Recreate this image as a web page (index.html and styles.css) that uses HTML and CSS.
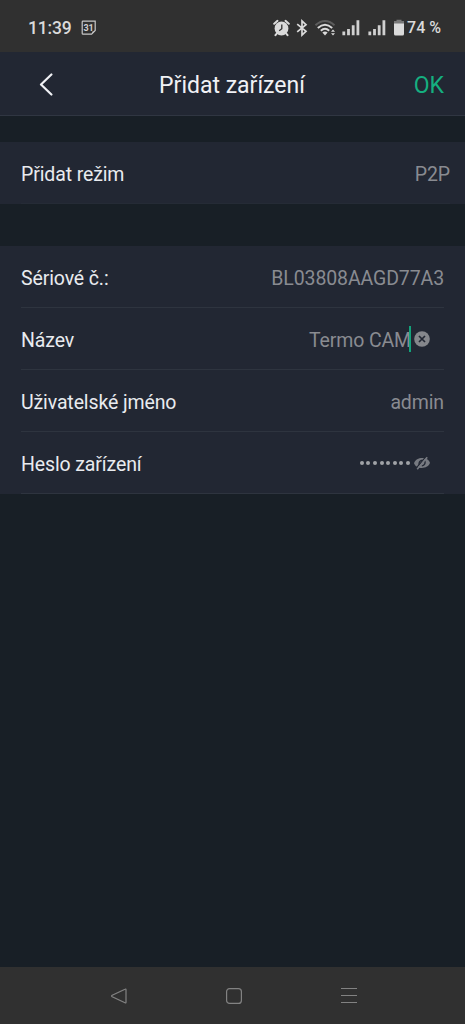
FILE: index.html
```html
<!DOCTYPE html>
<html lang="cs">
<head>
<meta charset="utf-8">
<title>Přidat zařízení</title>
<link rel="stylesheet" href="styles.css">
</head>
<body>
<div class="screen">
  <div class="status">
    <span class="clock">11:39</span>
    <svg class="calendar" width="16" height="16" viewBox="0 0 16 16"><path d="M2 1.2H14.2V10.5L10.6 14.2H2Q1.2 14.2 1.2 13.4V2Q1.2 1.2 2 1.2Z" fill="none" stroke="#c8c8c8" stroke-width="1.2"/><path d="M11.4 13.6V11.4H13.6Z" fill="#c8c8c8"/><text x="7.6" y="10.8" text-anchor="middle" class="day">31</text></svg>
    <div class="indicators">
      <svg width="17" height="18" viewBox="0 0 17 18"><path d="M1.2 4.8 4.5 1.8M15.8 4.8 12.5 1.8M3.8 14.5 2.5 16.2M13.2 14.5 14.5 16.2" stroke="#dadada" stroke-width="2" stroke-linecap="round"/><circle cx="8.5" cy="9.5" r="6.9" fill="#dadada"/><path d="M8.8 5.5V9.7L6.2 11.8" fill="none" stroke="#303030" stroke-width="1.3"/></svg>
      <svg class="bluetooth" width="12" height="18" viewBox="0 0 12 18"><path d="M1.2 5.2 10 12.4 6 16V2L10 5.6 1.2 12.8" fill="none" stroke="#dadada" stroke-width="1.7"/></svg>
      <svg class="wifi" width="22" height="18" viewBox="0 0 22 18"><g fill="none" stroke-width="1.9"><path d="M.5 6.2Q10 -2.2 19.5 6.2" stroke="#5c5c5c"/><path d="M2.8 9Q10 2.4 17.2 9" stroke="#dadada"/><path d="M5.8 11.8Q10 7.8 14.2 11.8" stroke="#dadada"/></g><path d="M7.4 13.6Q10 11.4 12.6 13.6L10 16.4Z" fill="#dadada"/><path d="M16 12.8 18 10.4 20 12.8ZM16 14.2 18 16.6 20 14.2Z" fill="#dadada"/></svg>
      <svg class="signal" width="18" height="18" viewBox="0 0 18 18"><path d="M1.8 16.2V12.5M6.5 16.2V10M11.2 16.2V6.2M15.9 16.2V1.2" stroke="#d0d0d0" stroke-width="2.8"/></svg>
      <svg class="signal second" width="18" height="18" viewBox="0 0 18 18"><path d="M1.8 16.2V12.5M6.5 16.2V10M11.2 16.2V6.2M15.9 16.2V1.2" stroke="#d0d0d0" stroke-width="2.8"/></svg>
      <svg class="battery" width="12" height="18" viewBox="0 0 12 18"><path d="M3.5 .8H8.5V2H11V5H1V2H3.5Z" fill="#777"/><path d="M1 4.5H11V15Q11 16.5 9.5 16.5H2.5Q1 16.5 1 15Z" fill="#dadada"/></svg>
      <span class="percent">74 %</span>
    </div>
  </div>
  <header class="bar">
    <svg class="back" width="16" height="24" viewBox="0 0 16 24"><path d="M13.4 1.5 3 11.5 13.4 21.5" fill="none" stroke="#f0f1f5" stroke-width="2.2" stroke-linecap="round" stroke-linejoin="round"/></svg>
    <h1 class="title">Přidat zařízení</h1>
    <span class="ok">OK</span>
  </header>
  <main class="content">
    <section class="card">
      <div class="row mode"><span class="label">Přidat režim</span><span class="value p2p">P2P</span></div>
    </section>
    <section class="card">
      <div class="row"><span class="label">Sériové č.:</span><span class="value">BL03808AAGD77A3</span></div>
      <div class="row"><span class="label">Název</span><span class="value name">Termo CAM</span><i class="caret"></i>
        <svg class="clear" width="16" height="16" viewBox="0 0 16 16"><circle cx="8" cy="8" r="7.8" fill="#85878c"/><path d="M5 5 11 11M11 5 5 11" stroke="#222733" stroke-width="1.7"/></svg></div>
      <div class="row"><span class="label">Uživatelské jméno</span><span class="value">admin</span></div>
      <div class="row"><span class="label">Heslo zařízení</span><span class="dots"><i></i><i></i><i></i><i></i><i></i><i></i><i></i><i></i></span>
        <svg class="eye" width="18" height="14" viewBox="0 0 18 14"><path d="M1 7.2C3 .4 15 .4 17 6.8C15 13.6 3 13.6 1 7.2Z" fill="#777a81"/><path d="M6.2 9.5Q5.2 5 9.4 4.1M11.8 4.8Q13 8.8 8.8 10" fill="none" stroke="#222733" stroke-width="1.3"/><path d="M3 12.4 13 .6" stroke="#222733" stroke-width="1.3"/><path d="M4.2 13.2 14.2 1.2" stroke="#777a81" stroke-width="1.6"/></svg></div>
    </section>
  </main>
  <nav class="nav">
    <svg width="18" height="18" viewBox="0 0 18 18"><path d="M15 2.2Q16 1.6 16 2.8V15.2Q16 16.4 15 15.8L2.2 9.8Q1 9 2.2 8.2Z"/></svg>
    <svg width="18" height="18" viewBox="0 0 18 18"><rect x="1.6" y="1.6" width="14.8" height="14.8" rx="3"/></svg>
    <svg width="18" height="18" viewBox="0 0 18 18"><path d="M1 1.5H17M1 8.5H17M1 15.5H17"/></svg>
  </nav>
</div>
</body>
</html>
```
FILE: styles.css
```css
body {
  margin: 0;
  background: #181f26;
  font-family: Roboto, sans-serif;
}
.screen {
  width: 465px;
  height: 1024px;
  display: flex;
  flex-direction: column;
  overflow: hidden;
}
.status {
  height: 52px;
  box-sizing: border-box;
  padding: 3px 24px 0 28px;
  background: #303030;
  color: #dadada;
  display: flex;
  align-items: center;
}
.clock {
  font-size: 17.5px;
  font-weight: 500;
  letter-spacing: -0.2px;
}
.calendar { margin-left: 10px; }
.day {
  font-size: 9px;
  font-weight: 700;
  fill: #d0d0d0;
}
.indicators {
  margin-left: auto;
  display: flex;
  align-items: center;
}
.bluetooth { margin-left: 6px; }
.wifi { margin-left: 7px; }
.signal { margin-left: 5px; }
.second { margin-left: 8px; }
.battery { margin-left: 7px; }
.percent {
  margin-left: 2px;
  font-size: 16px;
  font-weight: 500;
}
.bar {
  height: 64px;
  box-sizing: border-box;
  padding: 2px 21px 0 38px;
  background: #222733;
  border-bottom: 1px solid #303642;
  display: grid;
  grid-template-columns: 39px 1fr 57px;
  align-items: center;
}
.title {
  margin: 0;
  padding-top: 2px;
  font-size: 23px;
  font-weight: 400;
  color: #f0f1f5;
  text-align: center;
  white-space: nowrap;
}
.ok {
  padding-top: 2px;
  color: #15af80;
  font-size: 23px;
  text-align: right;
}
.content {
  flex: 1;
  padding-top: 26px;
  display: flex;
  flex-direction: column;
  gap: 42px;
}
.card { background: #222733; }
.row {
  height: 61px;
  margin: 0 21px;
  border-bottom: 1px solid #2e343f;
  display: flex;
  align-items: center;
  font-size: 19.5px;
  letter-spacing: -0.12px;
}
.mode {
  margin-right: 15px;
  border-bottom-color: #252b36;
}
.label {
  padding-top: 3px;
  color: #e9ebef;
  margin-right: auto;
}
.value {
  padding-top: 3px;
  color: #898b91;
}
.name { margin-right: -2px; }
.caret {
  width: 2px;
  height: 26px;
  background: #13a27b;
}
.clear { margin: 0 14px 0 3px; }
.dots {
  display: flex;
  gap: 2.6px;
}
.dots i {
  width: 4px;
  height: 4px;
  border-radius: 50%;
  background: #a0a2a7;
}
.eye { margin: 0 13px 0 3px; }
.nav {
  height: 57px;
  padding-left: 2px;
  background: #303030;
  display: flex;
  justify-content: center;
  align-items: center;
  gap: 97px;
}
.nav svg {
  fill: none;
  stroke: #828282;
  stroke-width: 1.2;
}
```
